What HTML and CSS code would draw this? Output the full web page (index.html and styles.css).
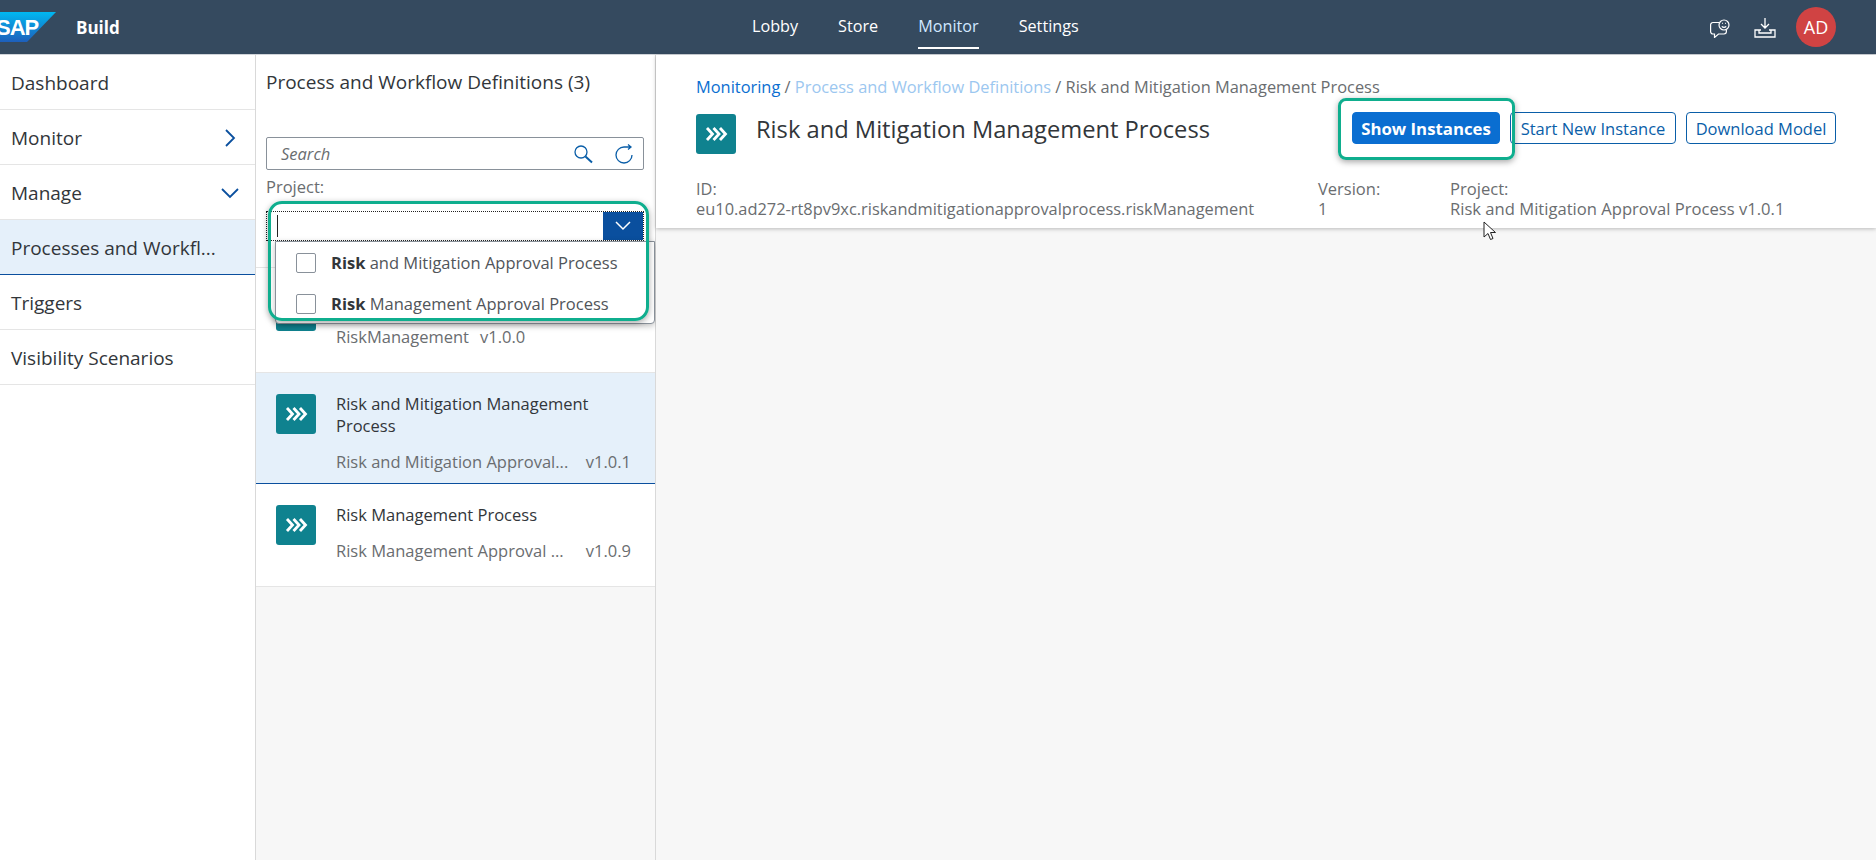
FILE: index.html
```html
<!DOCTYPE html>
<html lang="en">
<head>
  <meta charset="UTF-8" />
  <title>Monitor - SAP Build</title>
  <link rel="stylesheet" href="styles.css">
</head>
<body>

  <svg class="defs" width="0" height="0">
    <symbol id="chevrons" viewBox="0 0 40 40">
      <path d="M11 14l5.500 6-5.500 6M17.500 14l5.500 6-5.500 6M24 14l5.500 6-5.500 6" fill="none" stroke="#fff" stroke-width="2.800"/>
    </symbol>
  </svg>

  <header class="shell">
    <div class="shell-left">
      <svg class="logo" width="56" height="30" viewBox="0 0 56 30">
        <defs>
          <linearGradient id="sapBlue" x1="0" y1="0" x2="0" y2="1">
            <stop offset="0" stop-color="#00b8f1"/>
            <stop offset="1" stop-color="#1e5fbb"/>
          </linearGradient>
        </defs>
        <path d="M0 0H56L27 30H0Z" fill="url(#sapBlue)"/>
        <text x="-4" y="23" class="logo-text">SAP</text>
      </svg>
      <span class="product">Build</span>
    </div>
    <nav class="tabs">
      <a>Lobby</a>
      <a>Store</a>
      <a class="active">Monitor</a>
      <a>Settings</a>
    </nav>
    <div class="shell-right">
      <svg class="shell-icon" width="24" height="22" viewBox="0 0 24 22" fill="none" stroke="#fff" stroke-width="1.200">
        <path d="M9 6.500H3A2.400 2.400 0 0 0 .6 9v6.500A2.400 2.400 0 0 0 3 18h1.500v3.500l4-3.500H14a2.400 2.400 0 0 0 2.400-2.400v-1.500"/>
        <circle cx="14" cy="9" r="5"/>
        <path d="M11.800 10.300c1.200 1.300 3.200 1.300 4.400 0M12.200 7.300h.8M15 7.300h.8"/>
      </svg>
      <svg class="shell-icon" width="22" height="22" viewBox="0 0 22 22" fill="none" stroke="#fff" stroke-width="1.300">
        <path d="M11 2v10M7 8l4 4 4-4M7 14H1v7h20v-7h-6M5 14v3h12v-3"/>
      </svg>
      <div class="avatar">AD</div>
    </div>
  </header>

  <div class="main">
    <aside class="sidenav">
      <div class="nav-item">Dashboard</div>
      <div class="nav-item">Monitor
        <svg width="20" height="20" viewBox="0 0 20 20"><path d="M6 2l8 8-8 8" fill="none" stroke="#0a4f9e" stroke-width="1.800"/></svg>
      </div>
      <div class="nav-item">Manage
        <svg width="20" height="20" viewBox="0 0 20 20"><path d="M2 6l8 8 8-8" fill="none" stroke="#0a4f9e" stroke-width="1.800"/></svg>
      </div>
      <div class="nav-item selected">Processes and Workfl...</div>
      <div class="nav-item">Triggers</div>
      <div class="nav-item">Visibility Scenarios</div>
    </aside>

    <section class="master">
      <div class="master-head">
        <h2>Process and Workflow Definitions (3)</h2>
        <div class="search">
          <span class="search-text">Search</span>
          <svg width="20" height="20" viewBox="0 0 20 20" fill="none" stroke="#0a5ea8" stroke-width="1.300"><circle cx="7" cy="8" r="6"/><path d="M11.500 12.500l6.500 6" stroke-width="2"/></svg>
          <svg width="20" height="20" viewBox="0 0 20 20" fill="none" stroke="#0a5ea8" stroke-width="1.300"><path d="M10 3A8 8 0 1 0 18 11M10 3h7M14 .5l3 2.500-3 2.500"/></svg>
        </div>
        <label class="field-label">Project:</label>
        <div class="combo">
          <span class="caret"></span>
          <span class="combo-btn">
            <svg width="18" height="12" viewBox="0 0 18 12"><path d="M2 2l7 7 7-7" fill="none" stroke="#fff" stroke-width="1.500"/></svg>
          </span>
        </div>
      </div>

      <ul class="def-list">
        <li class="def first">
          <svg class="tile" width="40" height="40"><use href="#chevrons"/></svg>
          <div class="def-body">
            <div class="def-sub"><span>RiskManagement</span><span class="ver">v1.0.0</span></div>
          </div>
        </li>
        <li class="def selected">
          <svg class="tile" width="40" height="40"><use href="#chevrons"/></svg>
          <div class="def-body">
            <div class="def-title">Risk and Mitigation Management Process</div>
            <div class="def-sub spread"><span>Risk and Mitigation Approval...</span><span>v1.0.1</span></div>
          </div>
        </li>
        <li class="def">
          <svg class="tile" width="40" height="40"><use href="#chevrons"/></svg>
          <div class="def-body">
            <div class="def-title">Risk Management Process</div>
            <div class="def-sub spread"><span>Risk Management Approval ...</span><span>v1.0.9</span></div>
          </div>
        </li>
      </ul>

      <div class="popover">
        <div class="pop-row"><span class="check"></span><span><b>Risk</b> and Mitigation Approval Process</span></div>
        <div class="pop-row"><span class="check"></span><span><b>Risk</b> Management Approval Process</span></div>
      </div>
      <div class="callout callout-combo"></div>
    </section>

    <section class="detail">
      <div class="detail-head">
        <div class="crumbs"><a class="link">Monitoring</a> / <a class="link faded">Process and Workflow Definitions</a> / Risk and Mitigation Management Process</div>
        <div class="title-row">
          <svg class="tile" width="40" height="40"><use href="#chevrons"/></svg>
          <h1>Risk and Mitigation Management Process</h1>
          <div class="actions">
            <button class="btn primary">Show Instances</button>
            <button class="btn start">Start New Instance</button>
            <button class="btn download">Download Model</button>
            <div class="callout callout-btn"></div>
          </div>
        </div>
        <div class="meta">
          <div class="meta-id">ID:<br>eu10.ad272-rt8pv9xc.riskandmitigationapprovalprocess.riskManagement</div>
          <div class="meta-ver">Version:<br>1</div>
          <div class="meta-proj">Project:<br>Risk and Mitigation Approval Process v1.0.1</div>
        </div>
      </div>
      <svg class="cursor" width="14" height="20" viewBox="0 0 14 20"><path d="M1 1v15l4-3.500 2.500 6 2.500-1-2.500-6H12.500Z" fill="#fff" stroke="#222" stroke-width="1"/></svg>
    </section>
  </div>

</body>
</html>
```

FILE: styles.css
```css
* {
  margin: 0;
  padding: 0;
  box-sizing: border-box;
}

html, body {
  height: 100%;
  overflow: hidden;
}

body {
  font-family: 'Open Sans', sans-serif;
  font-size: 16.5px;
  color: #32363a;
  background: #fff;
  display: flex;
  flex-direction: column;
}

.defs {
  position: absolute;
}

/* top bar */
.shell {
  height: 55px;
  background: #354a5f;
  border-bottom: 1px solid #d0d4d9;
  display: grid;
  grid-template-columns: 752px auto 1fr;
  align-items: center;
  color: #fff;
  flex: none;
}

.shell-left {
  display: flex;
  align-items: center;
}

.logo-text {
  font-family: 'Liberation Sans', sans-serif;
  font-weight: bold;
  font-size: 22px;
  letter-spacing: -1px;
  fill: #fff;
}

.product {
  margin-left: 20px;
  font-weight: bold;
  font-size: 17px;
}

.tabs {
  display: flex;
  gap: 40px;
  height: 100%;
  align-items: flex-start;
  font-size: 16.2px;
}

.tabs a {
  display: flex;
  align-items: center;
  border-bottom: 2px solid transparent;
  height: 49px;
  padding-top: 5px;
}

.tabs a.active {
  color: #d1e8ff;
  border-bottom-color: #fff;
}

.shell-right {
  display: flex;
  align-items: center;
  justify-content: flex-end;
  padding-right: 40px;
}

.shell-icon {
  margin-right: 20px;
}

.avatar {
  width: 40px;
  height: 40px;
  border-radius: 50%;
  background: #d04343;
  display: flex;
  align-items: center;
  justify-content: center;
  font-size: 18px;
}

.main {
  flex: 1;
  display: flex;
  min-height: 0;
}

/* left navigation */
.sidenav {
  width: 256px;
  border-right: 1px solid #d9d9d9;
  flex: none;
}

.nav-item {
  height: 55px;
  padding: 2px 15px 0 11px;
  display: flex;
  align-items: center;
  justify-content: space-between;
  border-bottom: 1px solid #e5e5e5;
  font-size: 19px;
}

.nav-item.selected {
  background: #e5f0fa;
  border-bottom-color: #0a4f9e;
}

/* master list */
.master {
  width: 400px;
  flex: none;
  position: relative;
  background: #f7f7f7;
  border-right: 1px solid #d9d9d9;
  display: flex;
  flex-direction: column;
}

.master-head {
  height: 213px;
  padding: 15px 11px 0 10px;
  background: #fff;
  border-bottom: 1px solid #e5e5e5;
}

.master-head h2 {
  font-size: 19px;
  font-weight: normal;
  line-height: 24px;
  height: 67px;
}

.search {
  height: 33px;
  border: 1px solid #89919a;
  border-radius: 2px;
  display: flex;
  align-items: center;
  gap: 20px;
  padding: 0 9px 0 14px;
}

.search-text {
  flex: 1;
  font-style: italic;
  color: #6a6d70;
}

.field-label {
  display: block;
  margin-top: 5px;
  line-height: 24px;
  color: #6a6d70;
}

.combo {
  margin-top: 12px;
  height: 30px;
  display: flex;
  justify-content: space-between;
  border: 1px dotted #222;
  background: #fff;
}

.caret {
  width: 1px;
  height: 22px;
  margin: 3px 0 0 10px;
  background: #222;
}

.combo-btn {
  width: 40px;
  background: #0a4f9e;
  display: flex;
  align-items: center;
  justify-content: center;
}

.def-list {
  list-style: none;
}

.def {
  background: #fff;
  border-bottom: 1px solid #e5e5e5;
  padding: 21px 24px 0 20px;
  height: 103px;
  display: flex;
  gap: 20px;
}

.def.first {
  height: 105px;
  padding-top: 23px;
}

.def.selected {
  background: #e5f0fa;
  height: 111px;
  border-bottom-color: #0a4f9e;
}

.tile {
  background: #0f828f;
  border-radius: 3px;
  flex: none;
}

.def-body {
  flex: 1;
  min-width: 0;
}

.def-title {
  line-height: 22px;
  margin-top: -1px;
}

.def-sub {
  margin-top: 14px;
  color: #6a6d70;
  line-height: 22px;
}

.def.first .def-sub {
  margin-top: 35px;
}

.def-sub.spread {
  display: flex;
  justify-content: space-between;
}

.def-sub .ver {
  margin-left: 11px;
}

.popover {
  position: absolute;
  left: 19px;
  top: 186px;
  width: 380px;
  height: 83px;
  background: #fff;
  border: 1px solid #89919a;
  border-radius: 0 0 4px 4px;
  box-shadow: 0 2px 6px rgba(0,0,0,0.25);
}

.pop-row {
  height: 41px;
  display: flex;
  align-items: center;
  gap: 15px;
  padding-left: 20px;
}

.check {
  width: 20px;
  height: 20px;
  border: 1px solid #89919a;
  border-radius: 2px;
}

.pop-row span + span {
  color: #51555a;
}

.pop-row b {
  color: #32363a;
}

.callout {
  position: absolute;
  border: 3px solid #0fae8e;
  box-shadow: 0 2px 6px rgba(0,0,0,0.35);
  pointer-events: none;
}

.callout-combo {
  left: 12px;
  top: 146px;
  width: 381px;
  height: 120px;
  border-radius: 14px;
}

/* detail pane */
.detail {
  flex: 1;
  position: relative;
  background: #f7f7f7;
}

.detail-head {
  height: 173px;
  background: #fff;
  padding: 21px 40px 0 40px;
  box-shadow: 0 1px 4px rgba(0,0,0,0.25);
}

.crumbs {
  line-height: 22px;
  font-size: 16.4px;
  color: #6a6d70;
}

.link {
  color: #0a6ed1;
}

.link.faded {
  color: #9cc7f0;
}

.title-row {
  display: flex;
  align-items: flex-start;
  margin-top: 16px;
  height: 40px;
}

.title-row h1 {
  flex: 1;
  margin-left: 20px;
  font-size: 23.7px;
  line-height: 30px;
  font-weight: normal;
}

.actions {
  position: relative;
  display: flex;
  gap: 10px;
  margin-top: -2px;
}

.btn {
  height: 32px;
  font: inherit;
  color: #0a5ea8;
  background: #fff;
  border: 1px solid #0a5ea8;
  border-radius: 4px;
}

.btn.primary {
  width: 148px;
  background: #0a6ed1;
  border-color: #0a6ed1;
  color: #fff;
  font-size: 16.8px;
  font-weight: bold;
}

.btn.start {
  width: 166px;
}

.btn.download {
  width: 150px;
}

.callout-btn {
  left: -14px;
  top: -14px;
  width: 177px;
  height: 62px;
  border-radius: 8px;
}

.meta {
  display: flex;
  margin-top: 25px;
  line-height: 20px;
  color: #6a6d70;
}

.meta-id {
  width: 622px;
  font-size: 16.4px;
}

.meta-ver {
  width: 132px;
}

.meta-proj {
  font-size: 16.6px;
}

.cursor {
  position: absolute;
  left: 827px;
  top: 166px;
}
```
